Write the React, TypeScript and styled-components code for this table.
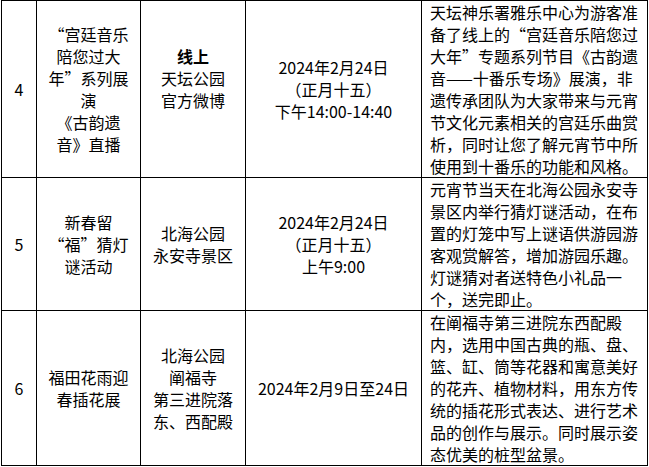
import React from "react";
import styled, { createGlobalStyle } from "styled-components";

type Line = string | { text: string; bold?: boolean };

interface EventRow {
  no: string;
  name: Line[];
  place: Line[];
  time: Line[];
  desc: Line[];
}

const rows: EventRow[] = [
  {
    no: "4",
    name: ["“宫廷音乐", "陪您过大", "年”系列展", "演", "《古韵遗", "音》直播"],
    place: [{ text: "线上", bold: true }, "天坛公园", "官方微博", ""],
    time: ["2024年2月24日", "（正月十五）", "下午14:00-14:40"],
    desc: [
      "天坛神乐署雅乐中心为游客准",
      "备了线上的“宫廷音乐陪您过",
      "大年”专题系列节目《古韵遗",
      "音——十番乐专场》展演，非",
      "遗传承团队为大家带来与元宵",
      "节文化元素相关的宫廷乐曲赏",
      "析，同时让您了解元宵节中所",
      "使用到十番乐的功能和风格。",
    ],
  },
  {
    no: "5",
    name: ["新春留", "“福”猜灯", "谜活动"],
    place: ["北海公园", "永安寺景区"],
    time: ["2024年2月24日", "（正月十五）", "上午9:00"],
    desc: [
      "元宵节当天在北海公园永安寺",
      "景区内举行猜灯谜活动，在布",
      "置的灯笼中写上谜语供游园游",
      "客观赏解答，增加游园乐趣。",
      "灯谜猜对者送特色小礼品一",
      "个，送完即止。",
    ],
  },
  {
    no: "6",
    name: ["福田花雨迎", "春插花展"],
    place: ["北海公园", "阐福寺", "第三进院落", "东、西配殿"],
    time: ["2024年2月9日至24日"],
    desc: [
      "在阐福寺第三进院东西配殿",
      "内，选用中国古典的瓶、盘、",
      "篮、缸、筒等花器和寓意美好",
      "的花卉、植物材料，用东方传",
      "统的插花形式表达、进行艺术",
      "品的创作与展示。同时展示姿",
      "态优美的桩型盆景。",
    ],
  },
];

const widths = [35, 104, 105, 176, 226];

function Lines({ lines }: { lines: Line[] }) {
  return (
    <>
      {lines.map((l, i) => {
        const text = typeof l === "string" ? l : l.text;
        const bold = typeof l === "string" ? false : !!l.bold;
        return (
          <TextLine key={i} $bold={bold}>
            {text || "\u00a0"}
          </TextLine>
        );
      })}
    </>
  );
}

function App() {
  return (
    <>
      <GlobalStyle />
      <Page>
        <Table>
          <colgroup>
            {widths.map((w, i) => (
              <Col key={i} $w={w} />
            ))}
          </colgroup>
          <tbody>
            {rows.map((r) => (
              <tr key={r.no}>
                <Cell>{r.no}</Cell>
                <Cell>
                  <Lines lines={r.name} />
                </Cell>
                <Cell>
                  <Lines lines={r.place} />
                </Cell>
                <Cell>
                  <Lines lines={r.time} />
                </Cell>
                <Cell $left>
                  <Lines lines={r.desc} />
                </Cell>
              </tr>
            ))}
          </tbody>
        </Table>
      </Page>
    </>
  );
}

const GlobalStyle = createGlobalStyle`
  html, body {
    margin: 0;
    padding: 0;
    background: #fff;
  }
  body {
    font-family: "Noto Sans CJK SC", "Liberation Sans", sans-serif;
    color: #000;
  }
`;

const Page = styled.div`
  padding-left: 1px;
`;

const Table = styled.table`
  width: 647px;
  table-layout: fixed;
  border-collapse: collapse;
  font-size: 16px;
  line-height: 22px;
`;

const Col = styled.col<{ $w: number }>`
  width: ${({ $w }) => $w}px;
`;

const Cell = styled.td<{ $left?: boolean }>`
  border: 1px solid #000;
  padding: ${({ $left }) => ($left ? "0 6px 0 8px" : "0")};
  text-align: ${({ $left }) => ($left ? "left" : "center")};
  vertical-align: middle;
`;

const TextLine = styled.div<{ $bold: boolean }>`
  white-space: nowrap;
  font-weight: ${({ $bold }) => ($bold ? 700 : 400)};
`;

export default App;
